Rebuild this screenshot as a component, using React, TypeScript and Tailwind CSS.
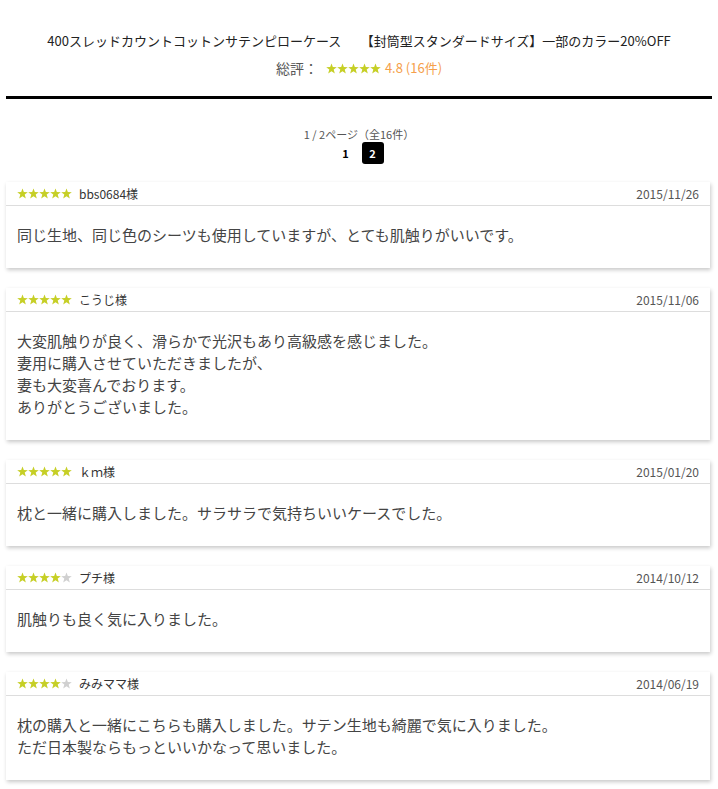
const reviews = [
  {
    stars: 5,
    name: "bbs0684様",
    date: "2015/11/26",
    lines: ["同じ生地、同じ色のシーツも使用していますが、とても肌触りがいいです。"],
  },
  {
    stars: 5,
    name: "こうじ様",
    date: "2015/11/06",
    lines: [
      "大変肌触りが良く、滑らかで光沢もあり高級感を感じました。",
      "妻用に購入させていただきましたが、",
      "妻も大変喜んでおります。",
      "ありがとうございました。",
    ],
  },
  {
    stars: 5,
    name: "ｋｍ様",
    date: "2015/01/20",
    lines: ["枕と一緒に購入しました。サラサラで気持ちいいケースでした。"],
  },
  {
    stars: 4,
    name: "プチ様",
    date: "2014/10/12",
    lines: ["肌触りも良く気に入りました。"],
  },
  {
    stars: 4,
    name: "みみママ様",
    date: "2014/06/19",
    lines: [
      "枕の購入と一緒にこちらも購入しました。サテン生地も綺麗で気に入りました。",
      "ただ日本製ならもっといいかなって思いました。",
    ],
  },
];

function Star({ on }: { on: boolean }) {
  return (
    <svg width="11" height="11" viewBox="0 0 24 24" className="shrink-0">
      <polygon
        points="12,1 14.9,8.8 23.5,9 16.8,14.3 19.2,22.8 12,17.8 4.8,22.8 7.2,14.3 0.5,9 9.1,8.8"
        fill={on ? "#c6cf26" : "#d0d0d0"}
      />
    </svg>
  );
}

function Stars({ count }: { count: number }) {
  return (
    <div className="flex items-center">
      {[0, 1, 2, 3, 4].map((i) => (
        <Star key={i} on={i < count} />
      ))}
    </div>
  );
}

function ReviewCard({ review }: { review: (typeof reviews)[number] }) {
  return (
    <div className="bg-white mb-5 shadow-[1px_2px_4px_rgba(0,0,0,0.22)]">
      <div className="flex items-center justify-between h-[24px] px-[11px] border-b border-[#dddddd] text-[12px] text-[#333]">
        <div className="flex items-center gap-[7px]">
          <Stars count={review.stars} />
          <span>{review.name}</span>
        </div>
        <span className="text-[#555]">{review.date}</span>
      </div>
      <div className="px-[11px] pt-[18px] pb-[22px] text-[15px] leading-[22px] text-[#444]">
        {review.lines.map((l, i) => (
          <p key={i}>{l}</p>
        ))}
      </div>
    </div>
  );
}

export default function App() {
  return (
    <div className="w-[718px] min-h-[789px] bg-white font-['Noto_Sans_CJK_JP',sans-serif]">
      <div className="pt-[31px] text-center">
        <h1 className="text-[13px] leading-5 text-[#222]">
          400スレッドカウントコットンサテンピローケース　　【封筒型スタンダードサイズ】一部のカラー20%OFF
        </h1>
        <div className="mt-[7px] flex items-center justify-center text-[13px] leading-5">
          <span className="text-[14px] text-[#555] mr-[8px]">総評：</span>
          <Stars count={5} />
          <span className="ml-1 text-[#f5a04a]">4.8 (16件)</span>
        </div>
      </div>
      <div className="mx-[6px] mt-[18px] h-[3px] bg-black" />
      <div className="mt-7 text-center text-[11px] leading-[14px] text-[#555]">
        1 / 2ページ（全16件）
      </div>
      <div className="flex justify-center gap-[5px] mt-px">
        <span className="w-[22px] h-[22px] flex items-center justify-center text-[11px] font-bold text-black">
          1
        </span>
        <span className="w-[22px] h-[22px] flex items-center justify-center rounded-[3px] bg-black text-[11px] font-bold text-white">
          2
        </span>
      </div>
      <div className="mt-[18px] pl-[6px] pr-[8px]">
        {reviews.map((r) => (
          <ReviewCard key={r.date} review={r} />
        ))}
      </div>
    </div>
  );
}
